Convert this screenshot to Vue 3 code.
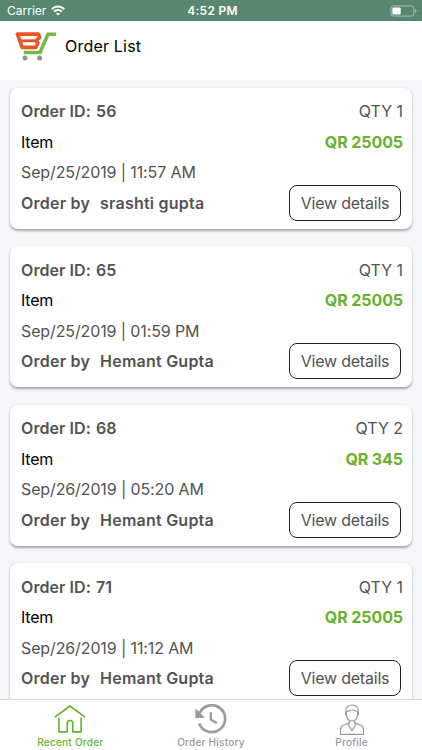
<script setup>
const orders = [
  { id: 56, qty: 1, price: 'QR 25005', date: 'Sep/25/2019 | 11:57 AM', by: 'srashti gupta' },
  { id: 65, qty: 1, price: 'QR 25005', date: 'Sep/25/2019 | 01:59 PM', by: 'Hemant Gupta' },
  { id: 68, qty: 2, price: 'QR 345', date: 'Sep/26/2019 | 05:20 AM', by: 'Hemant Gupta' },
  { id: 71, qty: 1, price: 'QR 25005', date: 'Sep/26/2019 | 11:12 AM', by: 'Hemant Gupta' },
]
</script>

<template>
  <div class="screen">
    <div class="status">
      <div class="carrier">
        <span>Carrier</span>
        <svg width="14" height="11" viewBox="0 0 14 11" fill="none" stroke="#fff" stroke-width="2">
          <path d="M0.8 4.2C4.3 0.7 9.7 0.7 13.2 4.2" />
          <path d="M3.1 6.6C5.3 4.5 8.7 4.5 10.9 6.6" />
          <path d="M7 10.6L4.9 8.5C6.1 7.4 7.9 7.4 9.1 8.5Z" fill="#fff" stroke="none" />
        </svg>
      </div>
      <span class="time">4:52 PM</span>
      <svg class="battery" width="28" height="12" viewBox="0 0 28 12">
        <rect x="0.9" y="0.9" width="23" height="10.2" rx="2.6" fill="none" stroke="#a5bfb2" stroke-width="1" />
        <rect x="2.4" y="2.4" width="8.3" height="7.2" rx="1" fill="#fff" />
        <path d="M25.2 4.2C27 4.8 27 7.2 25.2 7.8Z" fill="#a5bfb2" />
      </svg>
    </div>

    <header class="header">
      <svg class="logo" width="42" height="30" viewBox="0 0 42 30" fill="none">
        <path d="M23.4 3.1H2.4L7.2 16.4H20.8L23 11.8L21 9.8L24.6 6.4Z" stroke="#ea5426" stroke-width="3.6" stroke-linejoin="round" />
        <path d="M6 9.8H21" stroke="#ea5426" stroke-width="2.9" />
        <path d="M8.8 21.4H25L33 3.2H41" stroke="#74b944" stroke-width="3.5" />
        <circle cx="10" cy="27" r="2.5" fill="#929292" />
        <circle cx="24.6" cy="27" r="2.5" fill="#929292" />
      </svg>
      <h1>Order List</h1>
    </header>

    <main class="list">
      <article v-for="o in orders" :key="o.id" class="card">
        <div class="row">
          <span class="strong oid">Order ID: <span class="num">{{ o.id }}</span></span>
          <span class="qty">QTY {{ o.qty }}</span>
        </div>
        <div class="row">
          <span class="item">Item</span>
          <span class="price">{{ o.price }}</span>
        </div>
        <div class="row"><span class="date">{{ o.date }}</span></div>
        <div class="row">
          <span class="strong by"><span class="label">Order by</span><span>{{ o.by }}</span></span>
          <button class="details">View details</button>
        </div>
      </article>
    </main>

    <nav class="tabs">
      <div class="tab active">
        <svg width="32" height="30" viewBox="0 0 32 30" fill="none" stroke="currentColor" stroke-width="1.6" stroke-linejoin="round" stroke-linecap="round">
          <path d="M1.2 12.9L16 2L30.8 12.9" />
          <path d="M4.9 14.3V27.9H13.2V19.2C13.2 15.6 18.8 15.6 18.8 19.2V27.9H27.1V14.3" />
        </svg>
        <span>Recent Order</span>
      </div>
      <div class="tab">
        <svg width="32" height="30" viewBox="0 0 32 30" fill="none" stroke="currentColor">
          <path d="M4.6 9A13.4 13.4 0 1 1 4.2 19.4" stroke-width="2.7" />
          <path d="M0.4 4.6L10 13.8L0.4 14.2Z" fill="currentColor" stroke="none" />
          <path d="M15.8 8.2V15.6L21.9 19.2" stroke-width="2.3" />
        </svg>
        <span>Order History</span>
      </div>
      <div class="tab">
        <svg width="32" height="32" viewBox="0 0 32 32" fill="none" stroke="currentColor" stroke-width="1.2" stroke-linejoin="round">
          <path d="M10 8.3C8.7 4 11.7 1 16 1C20.3 1 23.3 4 22 8.3" />
          <path d="M10.4 7.2C13 7.8 14.2 6 16.5 6C18.8 6 19.7 7.4 21.6 7.4V10.2C21.6 14.4 19 17 16 17C13 17 10.4 14.4 10.4 10.2Z" />
          <path d="M10.4 8.2C8.8 8.2 9 11.2 10.7 11.3M21.6 8.2C23.2 8.2 23 11.2 21.3 11.3" />
          <path d="M13.3 16V19L7.1 21.3C5 22.1 4.5 23.8 4.5 26V30.3H27.5V26C27.5 23.8 27 22.1 24.9 21.3L18.7 19V16" />
          <path d="M13.3 18.6L12 20.2L16 26.6L20 20.2L18.7 18.6" />
        </svg>
        <span>Profile</span>
      </div>
    </nav>
  </div>
</template>

<style>
body { margin: 0; overflow: hidden; }
</style>

<style scoped>
.screen {
  width: 422px;
  height: 750px;
  display: flex;
  flex-direction: column;
  overflow: hidden;
  background: #f4f8fa;
  font-family: Inter, "Liberation Sans", sans-serif;
  color: #535353;
}
.status {
  flex: none;
  height: 21px;
  box-sizing: border-box;
  padding: 0 4px 0 7px;
  display: grid;
  grid-template-columns: 1fr auto 1fr;
  align-items: center;
  background: #58876f;
  color: #fff;
  font-size: 12px;
}
.carrier { display: flex; align-items: center; gap: 5px; }
.time { font-weight: 600; letter-spacing: 0.25px; }
.battery { justify-self: end; }
.header {
  flex: none;
  height: 59px;
  box-sizing: border-box;
  padding: 9px 15px 0;
  display: flex;
  align-items: flex-start;
  gap: 8px;
  background: #fff;
}
.logo { margin-top: 1px; }
h1 {
  margin: 4px 0 0;
  font-size: 16px;
  line-height: 24px;
  font-weight: 400;
  letter-spacing: 0.2px;
  color: #000;
}
.list {
  flex: 1;
  min-height: 0;
  overflow: hidden;
  padding: 7.5px 10px 0;
  display: flex;
  flex-direction: column;
  gap: 17.5px;
}
.card {
  flex: none;
  height: 141px;
  box-sizing: border-box;
  padding: 8.5px 9px 0 11px;
  border-radius: 8px;
  background: #fff;
  box-shadow: 0 1.5px 2.5px rgba(0, 0, 0, 0.32);
}
.row {
  height: 30.5px;
  display: flex;
  align-items: center;
  justify-content: space-between;
  font-size: 16px;
  line-height: 20px;
  white-space: nowrap;
}
.strong { font-weight: 600; }
.oid { letter-spacing: 0.08px; }
.num { margin-left: 1px; }
.date { letter-spacing: -0.12px; }
.by { letter-spacing: 0.23px; }
.label { margin-right: 10px; }
.item { color: #000; letter-spacing: -0.2px; }
.price { color: #67b22e; font-weight: 700; letter-spacing: -0.08px; }
.details {
  width: 112px;
  height: 36px;
  margin-right: 2px;
  padding: 0;
  border: 1.5px solid #222;
  border-radius: 8px;
  background: #fff;
  color: #535353;
  font: inherit;
  letter-spacing: -0.22px;
}
.tabs {
  flex: none;
  height: 51px;
  box-sizing: border-box;
  border-top: 1px solid #d5d7d8;
  display: grid;
  grid-template-columns: repeat(3, 1fr);
  background: #fff;
}
.tab {
  display: flex;
  flex-direction: column;
  align-items: center;
  justify-content: space-between;
  padding: 4px 0 1px;
  color: #9b9b9b;
  font-size: 10px;
  line-height: 13px;
  font-weight: 500;
  letter-spacing: 0.25px;
}
.tab svg { flex: none; }
.tab.active { color: #67b22e; }
</style>
